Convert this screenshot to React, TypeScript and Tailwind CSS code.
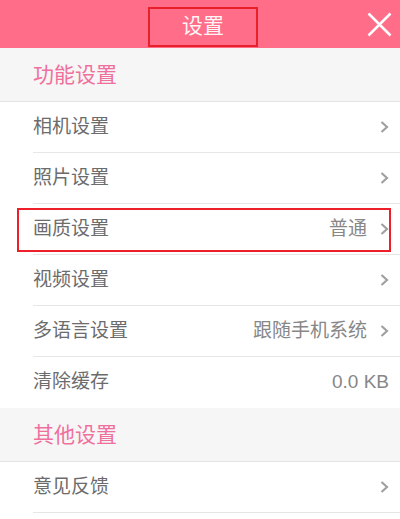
const font = { fontFamily: '"Liberation Sans", "Noto Sans CJK SC", sans-serif' };

const Chevron = () => (
  <svg width="9" height="12" viewBox="0 0 9 12" className="ml-[13px]">
    <polyline points="1.5,1 7,6 1.5,11" fill="none" stroke="#a0a0a0" strokeWidth="2.2" />
  </svg>
);

type RowProps = { label: string; value?: string; arrow?: boolean; boxed?: boolean; last?: boolean };

const Row = ({ label, value, arrow = true, boxed, last }: RowProps) => (
  <div className="relative pl-[33px] bg-white">
    <div className={`flex h-[51px] items-center pr-[11px] ${last ? "" : "border-b border-[#e6e6e6]"}`}>
      <span className="flex-1 text-[19px] text-[#6c6c6c]">{label}</span>
      {value && <span className="text-[19px] text-[#878787]">{value}</span>}
      {arrow && <Chevron />}
    </div>
    {boxed && (
      <div className="absolute left-[17px] right-[9px] top-[4px] bottom-[3px] border-2 border-[#ec1f2b]" />
    )}
  </div>
);

const Section = ({ title }: { title: string }) => (
  <div className="flex h-[54px] items-center pl-[33px] bg-[#f6f6f6] border-b border-[#e3e3e3]">
    <span className="text-[21px] text-[#ef709c]">{title}</span>
  </div>
);

export default function App() {
  return (
    <div className="w-[400px] h-[519px] overflow-hidden bg-white" style={font}>
      <header className="relative flex h-[48px] justify-center bg-[#ff6d88] pt-[7px]">
        <div className="ml-[6px] flex h-[40px] w-[110px] items-center justify-center border-2 border-[#e8202c] pb-[2px]">
          <span className="text-[21px] text-[#fff4f6]">设置</span>
        </div>
        <svg width="25" height="25" viewBox="0 0 25 25" className="absolute right-[8px] top-[12px]">
          <path d="M1.5 1.5 L23.5 23.5 M23.5 1.5 L1.5 23.5" stroke="#ffffff" strokeWidth="2.5" />
        </svg>
      </header>

      <Section title="功能设置" />
      <Row label="相机设置" />
      <Row label="照片设置" />
      <Row label="画质设置" value="普通" boxed />
      <Row label="视频设置" />
      <Row label="多语言设置" value="跟随手机系统" />
      <Row label="清除缓存" value="0.0 KB" arrow={false} last />

      <Section title="其他设置" />
      <Row label="意见反馈" />
    </div>
  );
}
